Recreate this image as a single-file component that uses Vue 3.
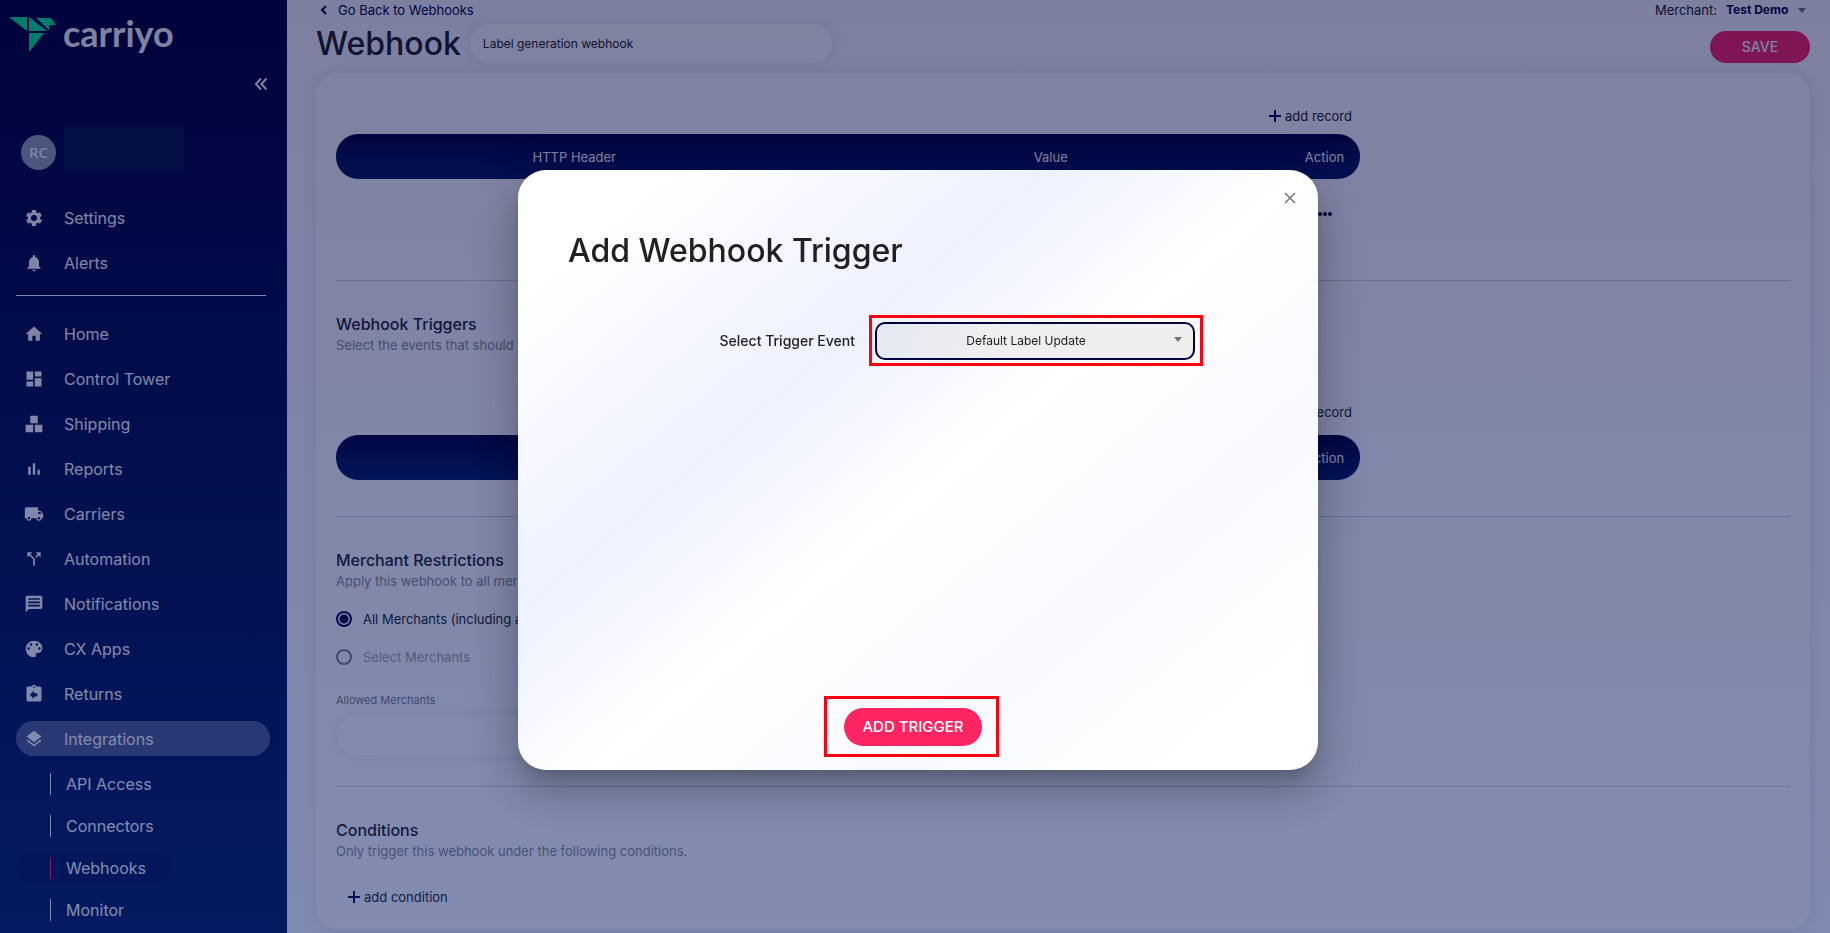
<script setup>
import { ref } from 'vue'

const topNav = [
  { label: 'Settings', icon: 'M19.14 12.94c.04-.3.06-.61.06-.94s-.02-.64-.07-.94l2.03-1.58a.49.49 0 0 0 .12-.61l-1.92-3.32a.49.49 0 0 0-.59-.22l-2.39.96a7 7 0 0 0-1.62-.94l-.36-2.54a.48.48 0 0 0-.48-.41h-3.84a.47.47 0 0 0-.47.41l-.36 2.54c-.59.24-1.13.57-1.62.94l-2.39-.96a.48.48 0 0 0-.59.22L2.74 8.87a.47.47 0 0 0 .12.61l2.03 1.58c-.05.3-.09.63-.09.94s.02.64.07.94l-2.03 1.58a.49.49 0 0 0-.12.61l1.92 3.32c.12.22.37.29.59.22l2.39-.96c.5.38 1.03.7 1.62.94l.36 2.54c.05.24.24.41.48.41h3.84c.24 0 .44-.17.47-.41l.36-2.54a7 7 0 0 0 1.62-.94l2.39.96c.22.08.47 0 .59-.22l1.92-3.32a.47.47 0 0 0-.12-.61zM12 15.6a3.6 3.6 0 1 1 0-7.2 3.6 3.6 0 0 1 0 7.2z' },
  { label: 'Alerts', icon: 'M12 22c1.1 0 2-.9 2-2h-4a2 2 0 0 0 2 2zm6-6v-5c0-3.07-1.64-5.64-4.5-6.32V4a1.5 1.5 0 0 0-3 0v.68C7.63 5.36 6 7.92 6 11v5l-2 2v1h16v-1z' }
]

const mainNav = [
  { label: 'Home', icon: 'M10 20v-6h4v6h5v-8h3L12 3 2 12h3v8z' },
  { label: 'Control Tower', icon: 'M3 13h8V3H3v10zm0 8h8v-6H3v6zm10 0h8V11h-8v10zm0-18v6h8V3h-8z' },
  { label: 'Shipping', icon: 'M2 22h9v-9H2v9zm11 0h9v-9h-9v9zM7.500 11h9V2h-9z' },
  { label: 'Reports', icon: 'M5 9.200h3V19H5zM10.600 5h2.800v14h-2.800zm5.600 8H19v6h-2.800z' },
  { label: 'Carriers', icon: 'M20 8h-3V4H3c-1.100 0-2 .9-2 2v11h2a3 3 0 0 0 6 0h6a3 3 0 0 0 6 0h2v-5l-3-4zM6 18.500a1.500 1.500 0 1 1 0-3 1.500 1.500 0 0 1 0 3zm13.500-9 1.960 2.500H17V9.500h2.500zm-1.500 9a1.500 1.500 0 1 1 0-3 1.500 1.500 0 0 1 0 3z' },
  { label: 'Automation', icon: 'm14 4 2.290 2.290-2.880 2.880 1.420 1.420 2.880-2.880L20 10V4zm-4 0H4v6l2.290-2.290 4.710 4.700V20h2v-8.410l-5.290-5.300z' },
  { label: 'Notifications', icon: 'M20 2H4c-1.100 0-2 .9-2 2v18l4-4h14c1.100 0 2-.9 2-2V4c0-1.100-.9-2-2-2zM5 5h14v2H5zm0 4h14v2H5zm0 4h14v2H5z' },
  { label: 'CX Apps', icon: 'M12 2a10 10 0 0 0 0 20 2.500 2.500 0 0 0 1.860-4.170c-.1-.12-.16-.2-.16-.33 0-.28.22-.5.5-.5H16a6 6 0 0 0 6-6c0-4.960-4.490-9-10-9zM5.500 13a1.500 1.500 0 1 1 0-3 1.500 1.500 0 0 1 0 3zm3-5a1.500 1.500 0 1 1 0-3 1.500 1.500 0 0 1 0 3zm7 0a1.500 1.500 0 1 1 0-3 1.500 1.500 0 0 1 0 3zm3 5a1.500 1.500 0 1 1 0-3 1.500 1.500 0 0 1 0 3z' },
  { label: 'Returns', icon: 'M19 3h-4.180a3 3 0 0 0-5.640 0H5c-1.100 0-2 .9-2 2v14c0 1.100.9 2 2 2h14c1.100 0 2-.9 2-2V5c0-1.100-.9-2-2-2zm-7 0a1 1 0 1 1 0 2 1 1 0 0 1 0-2zm4 12h-4v3l-5-5 5-5v3h4z' },
  { label: 'Integrations', active: true, icon: 'm11.990 18.540-7.370-5.730L3 14.070l9 7 9-7-1.630-1.270zM12 16l7.360-5.730L21 9l-9-7-9 7 1.630 1.270z' }
]

const subNav = [
  { label: 'API Access' },
  { label: 'Connectors' },
  { label: 'Webhooks', current: true },
  { label: 'Monitor' }
]

const webhookName = ref('Label generation webhook')
const merchantScope = ref('all')
const allowedMerchants = ref('')
const triggerEvent = ref('Default Label Update')
const merchant = ref('Test Demo')
</script>

<template>
  <div class="page">
    <aside class="sidebar">
      <a class="brand" href="#">
        <svg class="brand-mark" width="48" height="36" viewBox="0 0 48 36" aria-hidden="true">
          <path d="M0 0h18v14zM20 0l18 14H20zM27 1h15l5 7h-7v5zM20 16h15L20 35z" />
        </svg>
        <span class="brand-name">carriyo</span>
      </a>
      <button class="collapse" type="button" aria-label="Collapse menu">
        <svg width="12" height="12" viewBox="0 0 12 12"><path d="M6 .5.900 6 6 11.500M11.500.5 6.400 6l5.100 5.500" /></svg>
      </button>
      <div class="account">
        <span class="avatar">RC</span>
        <span class="account-name"></span>
      </div>
      <nav>
        <a v-for="item in topNav" :key="item.label" class="nav-item" href="#">
          <svg width="20" height="20" viewBox="0 0 24 24" aria-hidden="true"><path :d="item.icon" /></svg>
          {{ item.label }}
        </a>
        <hr class="nav-rule" />
        <a v-for="item in mainNav" :key="item.label" class="nav-item" :class="{ active: item.active }" href="#">
          <svg width="20" height="20" viewBox="0 0 24 24" aria-hidden="true"><path fill-rule="evenodd" :d="item.icon" /></svg>
          {{ item.label }}
        </a>
        <div class="sub-nav">
          <a v-for="item in subNav" :key="item.label" class="sub-item" :class="{ current: item.current }" href="#"><span>{{ item.label }}</span></a>
        </div>
      </nav>
    </aside>

    <main class="main">
      <div class="topline">
        <a class="back" href="#">
          <svg width="8" height="10" viewBox="0 0 8 10" aria-hidden="true"><path d="M6 1 2 5l4 4" /></svg>
          Go Back to Webhooks
        </a>
        <div class="merchant">
          <label for="merchant">Merchant:</label>
          <select id="merchant" v-model="merchant"><option>Test Demo</option></select>
          <svg class="caret" width="8" height="5" viewBox="0 0 8 5" aria-hidden="true"><path d="M0 0h8L4 5z" /></svg>
        </div>
      </div>
      <div class="heading">
        <h1>Webhook</h1>
        <input v-model="webhookName" class="field name-field" type="text" aria-label="Webhook name" />
        <button class="save" type="button">SAVE</button>
      </div>

      <div class="card">
        <section class="headers">
          <div class="table-area">
            <button class="add" type="button">
              <svg width="12" height="12" viewBox="0 0 12 12" aria-hidden="true"><path d="M6 0v12M0 6h12" /></svg>add record
            </button>
            <table>
              <thead>
                <tr><th>HTTP Header</th><th>Value</th><th class="action">Action</th></tr>
              </thead>
              <tbody>
                <tr>
                  <td></td><td></td>
                  <td>
                    <button class="more" type="button" aria-label="Row actions">
                      <svg width="14" height="4" viewBox="0 0 14 4"><circle cx="2" cy="2" r="2" /><circle cx="7" cy="2" r="2" /><circle cx="12" cy="2" r="2" /></svg>
                    </button>
                  </td>
                </tr>
              </tbody>
            </table>
          </div>
        </section>

        <section class="triggers">
          <h2>Webhook Triggers</h2>
          <p>Select the events that should</p>
          <div class="table-area">
            <button class="add" type="button">
              <svg width="12" height="12" viewBox="0 0 12 12" aria-hidden="true"><path d="M6 0v12M0 6h12" /></svg>add record
            </button>
            <table>
              <thead>
                <tr><th></th><th></th><th class="action">Action</th></tr>
              </thead>
            </table>
          </div>
        </section>

        <section class="restrictions">
          <h2>Merchant Restrictions</h2>
          <p>Apply this webhook to all mer</p>
          <div class="radios">
            <label><input v-model="merchantScope" type="radio" name="scope" value="all" />All Merchants (including a</label>
            <label class="muted"><input v-model="merchantScope" type="radio" name="scope" value="some" />Select Merchants</label>
          </div>
          <label class="small-label" for="allowed">Allowed Merchants</label>
          <input id="allowed" v-model="allowedMerchants" class="field allowed-field" type="text" />
        </section>

        <section class="conditions">
          <h2>Conditions</h2>
          <p>Only trigger this webhook under the following conditions.</p>
          <button class="add" type="button">
            <svg width="12" height="12" viewBox="0 0 12 12" aria-hidden="true"><path d="M6 0v12M0 6h12" /></svg>add condition
          </button>
        </section>
      </div>
    </main>

    <div class="backdrop">
      <div class="modal" role="dialog" aria-modal="true" aria-labelledby="modal-title">
        <button class="close" type="button" aria-label="Close">
          <svg width="12" height="12" viewBox="0 0 12 12"><path d="m1 1 10 10M11 1 1 11" /></svg>
        </button>
        <h2 id="modal-title">Add Webhook Trigger</h2>
        <div class="event-row">
          <label for="event">Select Trigger Event</label>
          <div class="mark event-mark">
            <select id="event" v-model="triggerEvent"><option>Default Label Update</option></select>
            <svg class="caret" width="8" height="5" viewBox="0 0 8 5" aria-hidden="true"><path d="M0 0h8L4 5z" /></svg>
          </div>
        </div>
        <div class="mark submit-mark">
          <button class="submit" type="button">ADD TRIGGER</button>
        </div>
      </div>
    </div>
  </div>
</template>

<style>
body {
  margin: 0;
}
</style>

<style scoped>
.page,
.page * {
  box-sizing: border-box;
}
.page {
  display: flex;
  height: 100vh;
  overflow: hidden;
  font-family: Inter, "Liberation Sans", sans-serif;
  font-size: 13px;
  line-height: 20px;
  color: #212121;
  background: #fafaff;
}
button,
input,
select {
  font: inherit;
  color: inherit;
}
button {
  padding: 0;
  border: 0;
  background: none;
  cursor: pointer;
}
a {
  color: inherit;
  text-decoration: none;
}
h1,
h2,
p {
  margin: 0;
}

/* Sidebar */
.sidebar {
  flex: 0 0 287px;
  display: flex;
  flex-direction: column;
  padding: 0 16px;
  background: linear-gradient(#000238, #051a62);
  color: #fff;
}
.sidebar > * {
  flex-shrink: 0;
}
.brand {
  display: flex;
  align-items: flex-start;
  height: 60px;
  margin-left: -7px;
  padding-top: 17px;
}
.brand-mark {
  fill: #00f096;
}
.brand-name {
  margin-left: 6px;
  font: 700 36px/32px Lato, sans-serif;
}
.collapse {
  align-self: flex-end;
  width: 20px;
  height: 20px;
  margin: 15px 0 0;
}
.collapse svg,
.back svg,
.add svg,
.close svg {
  fill: none;
  stroke: currentColor;
  stroke-width: 2;
}
.account {
  display: flex;
  gap: 8px;
  margin: 32px 0 30px;
  padding-left: 5px;
}
.avatar {
  width: 35px;
  height: 35px;
  margin-top: 8px;
  border-radius: 50%;
  background: #95a5b4;
  font: 500 15px/35px "Noto Sans", sans-serif;
  text-align: center;
}
.account-name {
  width: 120px;
  height: 42px;
  background: #07163e;
}
.nav-item {
  display: flex;
  align-items: center;
  gap: 20px;
  height: 35px;
  width: 254px;
  margin-bottom: 10px;
  padding-left: 8px;
  border-radius: 18px;
  font-size: 16px;
}
.nav-item svg {
  fill: currentColor;
}
.nav-item.active {
  background: rgba(255, 255, 255, 0.3);
}
.nav-rule {
  width: 250px;
  height: 1px;
  margin: 15px 0 20px;
  border: 0;
  background: #fff;
}
.sub-nav {
  padding-top: 2px;
}
.sub-item {
  display: block;
  width: 155px;
  height: 32px;
  margin-bottom: 10px;
  padding: 5px 0 5px 34px;
  border-radius: 16px;
  font-size: 16px;
  line-height: 22px;
}
.sub-item span {
  display: block;
  padding-left: 15px;
  border-left: 1px solid #fff;
}
.sub-item.current {
  background: rgba(0, 0, 40, 0.15);
}
.sub-item.current span {
  border-color: #ff2562;
}

/* Content */
.main {
  flex: 1;
  min-width: 0;
  padding: 0 20px 0 29px;
}
.topline {
  display: flex;
  justify-content: space-between;
  height: 24px;
  color: #000540;
}
.back {
  display: flex;
  align-items: center;
  gap: 10px;
  height: 20px;
  padding-left: 4px;
}
.merchant {
  position: relative;
  display: flex;
  gap: 9px;
  height: 20px;
}
.merchant label {
  color: #212121;
}
.merchant select {
  padding: 0 21px 0 0;
  border: 0;
  background: none;
  appearance: none;
  font-weight: 700;
  font-size: 12px;
}
.caret {
  position: absolute;
  fill: #757575;
}
.merchant .caret {
  top: 8px;
  right: 4px;
}
.heading {
  display: flex;
  align-items: flex-end;
  gap: 9px;
  margin-bottom: 10px;
}
h1,
.modal h2 {
  font-size: 32px;
  font-weight: 500;
}
h1 {
  line-height: 39px;
}
.field {
  height: 39px;
  padding: 0 13px;
  border: 0;
  border-radius: 20px;
  background: #fff;
  box-shadow: 0 0 14px rgba(0, 5, 64, 0.1);
  font-size: 12px;
}
.name-field {
  width: 362px;
}
.save,
.submit {
  border-radius: 19px;
  background: #ff2562;
  color: #fff;
  font-weight: 500;
}
.save {
  width: 100px;
  height: 32px;
  margin-left: auto;
  font-size: 14px;
}
.card {
  padding: 0 20px;
  border-radius: 22px;
  background: #fff;
  box-shadow: 0 0 14px rgba(0, 5, 64, 0.1);
}
section + section {
  padding-top: 31px;
  border-top: 1px solid #d4d4d8;
}
.table-area {
  display: flex;
  flex-direction: column;
  align-items: flex-end;
  max-width: 1024px;
}
.add {
  display: flex;
  align-items: center;
  gap: 4px;
  height: 24px;
}
.add svg {
  color: #000a50;
}
.table-area .add {
  margin: 0 8px 6px 0;
}
table {
  width: 100%;
  border-collapse: collapse;
  table-layout: fixed;
}
th {
  height: 45px;
  padding: 0;
  background: linear-gradient(#000238, #051a62);
  color: #fff;
  font-weight: 400;
}
th.action {
  width: 71px;
}
th:first-child {
  border-radius: 22px 0 0 22px;
}
th:last-child {
  border-radius: 0 22px 22px 0;
}
td {
  height: 68px;
  padding: 0 0 4px;
  text-align: center;
}
.more {
  fill: #000540;
}
.headers {
  padding: 31px 0 33px;
}
.triggers {
  padding-bottom: 36px;
}
.triggers .table-area {
  margin-top: 44px;
}
.triggers .add {
  margin-bottom: 11px;
}
section h2 {
  font-size: 16px;
  font-weight: 500;
  line-height: 24px;
}
section p {
  padding-bottom: 2px;
  line-height: 18px;
  color: #8c8c8c;
}
.restrictions {
  padding-bottom: 31px;
}
.radios {
  margin: 8px 0 16px;
}
.radios label {
  display: flex;
  align-items: center;
  gap: 11px;
  height: 38px;
}
.radios .muted {
  color: #a4a4a4;
}
input[type="radio"] {
  width: 16px;
  height: 16px;
  margin: 0;
  border: 2px solid #808080;
  border-radius: 50%;
  appearance: none;
}
input[type="radio"]:checked {
  border-color: #000540;
  background: radial-gradient(#000540 4px, transparent 5px);
}
.small-label {
  display: block;
  margin-bottom: 8px;
  font-size: 11px;
  line-height: 16px;
  color: #7c7c7c;
}
.allowed-field {
  display: block;
  width: 362px;
}
.conditions {
  padding-bottom: 21px;
}
.conditions .add {
  margin: 23px 0 0 12px;
}

/* Dialog */
.backdrop {
  position: fixed;
  inset: 0;
  display: flex;
  align-items: center;
  justify-content: center;
  padding: 7px 0 0 6px;
  background: linear-gradient(rgba(0, 5, 64, 0.5), rgba(5, 26, 98, 0.5));
}
.modal {
  position: relative;
  display: flex;
  flex-direction: column;
  width: 100%;
  max-width: 800px;
  min-height: 600px;
  padding: 60px 50px 13px;
  border-radius: 28px;
  background: linear-gradient(140deg, #fff 10%, #eef1ff 35%, #fff 52%, #f8f9ff 72%, #fff 90%);
  box-shadow: 0 11px 15px -7px rgba(0, 0, 0, 0.2), 0 24px 38px 3px rgba(0, 0, 0, 0.14), 0 9px 46px 8px rgba(0, 0, 0, 0.12);
}
.close {
  position: absolute;
  top: 18px;
  right: 18px;
  display: grid;
  place-items: center;
  width: 20px;
  height: 20px;
  color: #757575;
}
.close svg {
  stroke-width: 1.5;
}
.modal h2 {
  line-height: 42px;
}
.event-row {
  display: flex;
  align-items: center;
  gap: 14px;
  margin-top: 43px;
  padding-right: 65px;
  justify-content: flex-end;
}
.event-row label {
  font-size: 14px;
  font-weight: 500;
}
.mark {
  position: relative;
  border: 3px solid #ff0012;
}
.event-mark {
  width: 334px;
  padding: 4px 5px 3px 3px;
}
.event-mark select {
  display: block;
  width: 100%;
  height: 38px;
  padding: 0 24px 0 6px;
  border: 2px solid #000540;
  border-radius: 10px;
  background: linear-gradient(110deg, #e5e8f2, #efefef 40%, #eee);
  appearance: none;
  text-align-last: center;
  font-size: 12px;
}
.event-mark .caret {
  top: 19px;
  right: 18px;
}
.submit-mark {
  align-self: center;
  margin: auto 13px 0 0;
  padding: 9px 14px 8px 17px;
}
.submit {
  display: block;
  height: 38px;
  padding: 0 18px;
  font-size: 15px;
}
</style>
